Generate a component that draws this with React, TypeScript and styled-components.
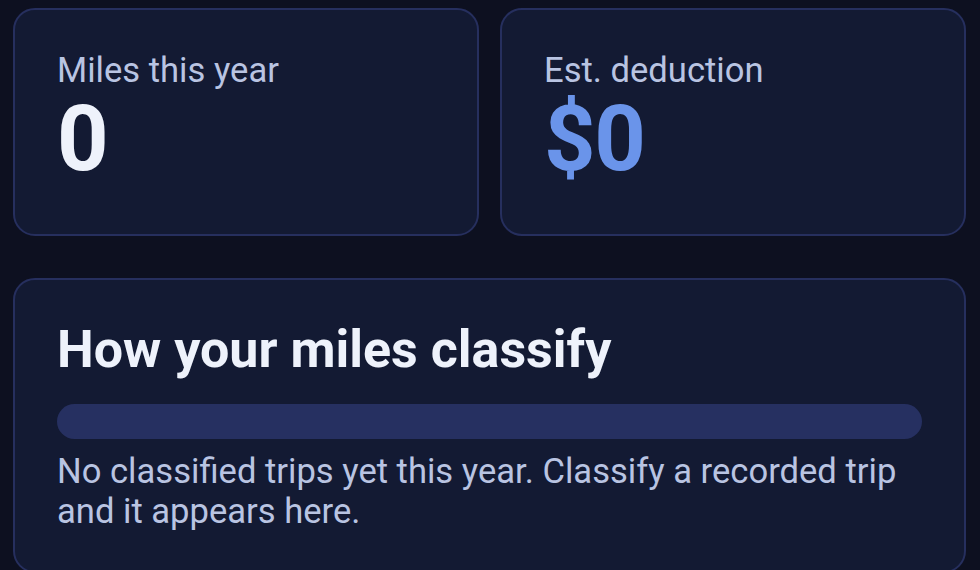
import React from "react";
import styled, { createGlobalStyle } from "styled-components";

const GlobalStyle = createGlobalStyle`
  html, body {
    margin: 0;
    padding: 0;
    background: #0d1020;
    font-family: Roboto, "Noto Sans", "Liberation Sans", sans-serif;
  }
  * { box-sizing: border-box; }
`;

const Page = styled.main`
  min-height: 570px;
  padding: 8px 14px 0 13px;
  display: flex;
  flex-direction: column;
  gap: 42px;
  overflow: hidden;
`;

const StatsRow = styled.div`
  display: grid;
  grid-template-columns: 1fr 1fr;
  gap: 21px;
`;

const Card = styled.section`
  background: #131a33;
  border: 2px solid #262f5e;
  border-radius: 22px;
  padding: 40px 42px;
`;

const StatCard = styled(Card)`
  height: 228px;
`;

const StatLabel = styled.div`
  font-size: 34.6px;
  line-height: 41px;
  color: #b9c4e2;
`;

const StatValue = styled.div<{ $accent?: boolean }>`
  margin-top: 4px;
  font-size: 90px;
  line-height: 90px;
  font-weight: 700;
  letter-spacing: -1.5px;
  color: ${(p) => (p.$accent ? "#6a94ea" : "#eef2fb")};
`;

const SectionTitle = styled.h2`
  margin: 0;
  font-size: 52px;
  line-height: 60px;
  font-weight: 700;
  color: #eef2fb;
`;

const Track = styled.div`
  margin-top: 24px;
  height: 35px;
  border-radius: 18px;
  background: #263061;
  overflow: hidden;
`;

const Fill = styled.div`
  height: 100%;
  background: #6a94ea;
`;

const EmptyText = styled.p`
  margin: 12px 0 0;
  font-size: 34.6px;
  line-height: 40px;
  color: #b9c4e2;
`;

const stats = [
  { label: "Miles this year", value: "0", accent: false },
  { label: "Est. deduction", value: "$0", accent: true },
];

const classifiedShare = 0;

export default function App() {
  return (
    <>
      <GlobalStyle />
      <Page>
        <StatsRow>
          {stats.map((s) => (
            <StatCard key={s.label}>
              <StatLabel>{s.label}</StatLabel>
              <StatValue $accent={s.accent}>{s.value}</StatValue>
            </StatCard>
          ))}
        </StatsRow>
        <Card>
          <SectionTitle>How your miles classify</SectionTitle>
          <Track>
            <Fill style={{ width: `${classifiedShare}%` }} />
          </Track>
          <EmptyText>
            No classified trips yet this year. Classify a recorded trip and it
            appears here.
          </EmptyText>
        </Card>
      </Page>
    </>
  );
}
